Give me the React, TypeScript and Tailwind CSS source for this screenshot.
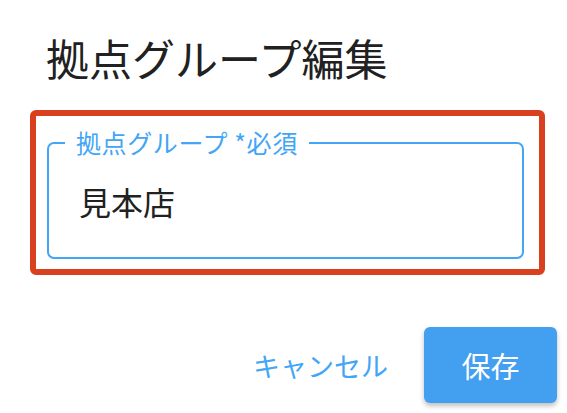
const FONT = "font-['Noto_Sans_CJK_JP','Noto_Sans',Roboto,sans-serif]";

export default function App() {
  return (
    <div className={`w-[567px] h-[413px] bg-white ${FONT} overflow-hidden`}>
      {/* Dialog title */}
      <h1 className="pt-[36px] pl-[46px] text-[43px] leading-none text-[#212121]">拠点グループ編集</h1>

      {/* Highlighted field wrapper */}
      <div className="ml-[30px] mt-[31px] w-[515px] h-[165px] border-[6px] border-[#d8401f] rounded-md pt-[14px] pl-[11px] pr-[15px]">
        <fieldset className="h-[129px] border-2 border-[#42a5f5] rounded-[7px] pl-[30px] pr-3">
          <legend className="ml-[-14px] px-[11px] text-[25px] leading-none tracking-[0.6px] text-[#42a5f5]">
            拠点グループ *必須
          </legend>
          <div className="pt-[30px] text-[32px] leading-none text-[#212121]">見本店</div>
        </fieldset>
      </div>

      {/* Actions */}
      <div className="flex justify-end items-center gap-[36px] mt-[52px] pr-[10px]">
        <button className="text-[27px] leading-none text-[#42a5f5]">キャンセル</button>
        <button className="w-[133px] h-[76px] bg-[#43a0f0] rounded-md shadow-[0_3px_5px_rgba(0,0,0,0.25)] text-white text-[29px] leading-none">
          保存
        </button>
      </div>
    </div>
  );
}
